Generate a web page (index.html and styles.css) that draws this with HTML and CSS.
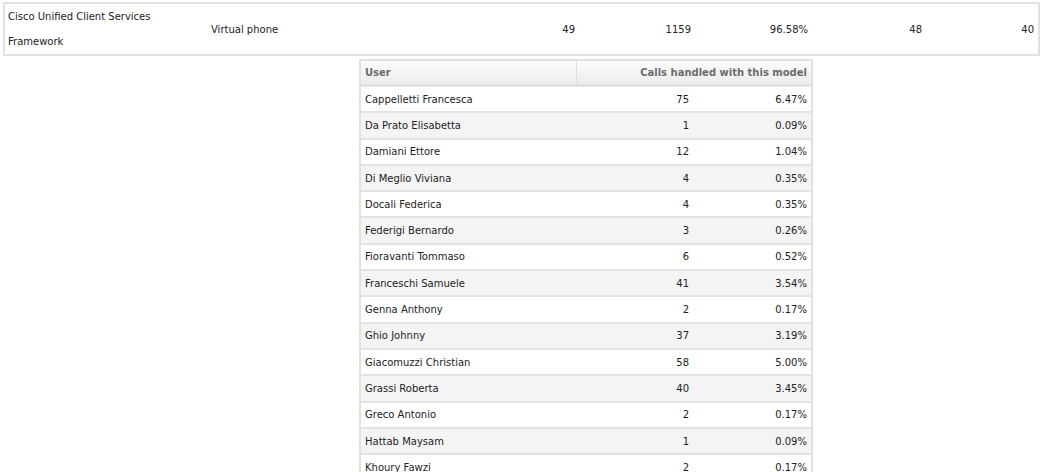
FILE: index.html
```html
<!DOCTYPE html>
<html lang="en">
<head>
<meta charset="utf-8">
<title>Phone models</title>
<link rel="stylesheet" href="styles.css">
</head>
<body>
<div class="report">
  <table class="summary">
    <colgroup>
      <col class="c1"><col class="c2"><col class="c3"><col class="c4"><col class="c5"><col class="c6"><col class="c7">
    </colgroup>
    <tr>
      <td class="model">Cisco Unified Client Services<br>Framework</td>
      <td class="type">Virtual phone</td>
      <td class="num">49</td>
      <td class="num">1159</td>
      <td class="num">96.58%</td>
      <td class="num mid">48</td>
      <td class="num">40</td>
    </tr>
  </table>

  <table class="detail">
    <colgroup>
      <col class="d1"><col class="d2"><col class="d3">
    </colgroup>
    <thead>
      <tr>
        <th class="hu">User</th>
        <th class="hc" colspan="2">Calls handled with this model</th>
      </tr>
    </thead>
    <tbody>
      <tr><td>Cappelletti Francesca</td><td class="num">75</td><td class="num">6.47%</td></tr>
      <tr class="alt"><td>Da Prato Elisabetta</td><td class="num">1</td><td class="num">0.09%</td></tr>
      <tr><td>Damiani Ettore</td><td class="num">12</td><td class="num">1.04%</td></tr>
      <tr class="alt"><td>Di Meglio Viviana</td><td class="num">4</td><td class="num">0.35%</td></tr>
      <tr><td>Docali Federica</td><td class="num">4</td><td class="num">0.35%</td></tr>
      <tr class="alt"><td>Federigi Bernardo</td><td class="num">3</td><td class="num">0.26%</td></tr>
      <tr><td>Fioravanti Tommaso</td><td class="num">6</td><td class="num">0.52%</td></tr>
      <tr class="alt"><td>Franceschi Samuele</td><td class="num">41</td><td class="num">3.54%</td></tr>
      <tr><td>Genna Anthony</td><td class="num">2</td><td class="num">0.17%</td></tr>
      <tr class="alt"><td>Ghio Johnny</td><td class="num">37</td><td class="num">3.19%</td></tr>
      <tr><td>Giacomuzzi Christian</td><td class="num">58</td><td class="num">5.00%</td></tr>
      <tr class="alt"><td>Grassi Roberta</td><td class="num">40</td><td class="num">3.45%</td></tr>
      <tr><td>Greco Antonio</td><td class="num">2</td><td class="num">0.17%</td></tr>
      <tr class="alt"><td>Hattab Maysam</td><td class="num">1</td><td class="num">0.09%</td></tr>
      <tr><td>Khoury Fawzi</td><td class="num">2</td><td class="num">0.17%</td></tr>
    </tbody>
  </table>
</div>
</body>
</html>
```
FILE: styles.css
```css
html, body {
  margin: 0;
  padding: 0;
  background: #fff;
}

body {
  font-family: "DejaVu Sans", Verdana, sans-serif;
  font-size: 10px;
  color: #222;
}

.report {
  padding: 2px 3px 0 3px;
}

.summary {
  width: 1035px;
  table-layout: fixed;
  border-collapse: collapse;
  border: 2px solid #e1e1e1;
}

.summary .c1 { width: 204px; }
.summary .c2 { width: 154px; }
.summary .c3 { width: 217px; }
.summary .c4 { width: 116px; }
.summary .c5 { width: 117px; }
.summary .c6 { width: 114px; }
.summary .c7 { width: 113px; }

.summary td {
  padding: 0 4px;
  vertical-align: middle;
  white-space: nowrap;
}

.summary .model {
  line-height: 25px;
  padding-left: 3px;
  height: 50px;
}

.summary .type {
  padding-left: 3px;
}

.num {
  text-align: right;
}

.detail {
  margin: 3px 0 0 356px;
  width: 450px;
  table-layout: fixed;
  border-collapse: separate;
  border-spacing: 0;
  border: 2px solid #e1e1e1;
  border-bottom: none;
}

.detail .d1 { width: 216px; }
.detail .d2 { width: 116px; }
.detail .d3 { width: 118px; }

.detail th {
  height: 23px;
  padding: 0 4px;
  font-weight: bold;
  color: #6b6b6b;
  background: linear-gradient(#fcfcfc, #ececec);
  border-bottom: 3px solid #e1e1e1;
  text-align: left;
}

.detail th.hu {
  border-right: 1px solid #dedede;
}

.detail th.hc {
  text-align: right;
}

.detail td {
  height: 24.3px;
  padding: 0 4px;
  border-bottom: 2px solid #e3e3e3;
  white-space: nowrap;
}

.detail tr.alt td {
  background: #f4f4f4;
}
```
